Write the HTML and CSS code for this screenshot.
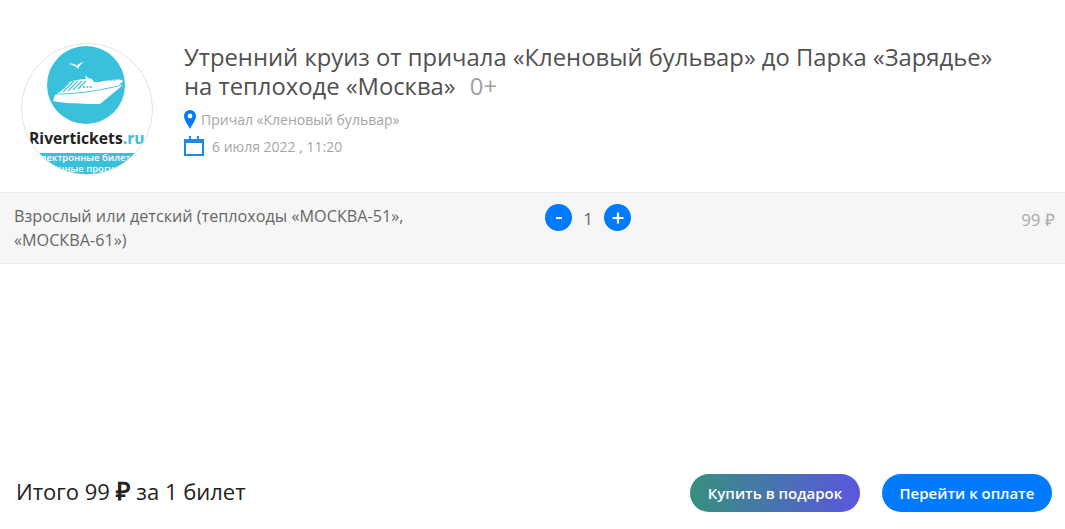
FILE: index.html
```html
<!DOCTYPE html>
<html lang="ru">
<head>
  <meta charset="UTF-8">
  <title>Утренний круиз</title>
  <link rel="stylesheet" href="styles.css">
</head>
<body>
  <div class="page">
    <header class="event">
      <div class="logo">
        <svg class="logo-art" width="130" height="130" viewBox="0 0 130 130">
          <circle cx="64" cy="41" r="39" fill="#38c0dc"/>
          <path d="M47 20c3-1 6 0 8 2 2-3 5-4 7-4-2 1-5 4-6 7-2-3-5-4-9-5z" fill="#fff"/>
          <path d="M31 57l2-6 3-2 10-10c6-3 12-4 18-4l-1-4 3 3 4 1 2 3h6c5-2 14-3 22-2l1 2-4 2 4 1-23 19c-14 0-32 0-47-3z" fill="#fff"/>
          <path d="M37 48l10-9M41 48l11-11M46 47l10-10M51 46l9-9M56 45l8-8" stroke="#38c0dc" stroke-width="1.1" fill="none"/>
          <path d="M34 50c18 0 38-2 66-9" stroke="#38c0dc" stroke-width="0.9" fill="none"/>
          <path d="M61 43h10M81 36h14" stroke="#38c0dc" stroke-width="1.4" stroke-dasharray="2 1.4" fill="none"/>
          <rect x="16" y="109" width="100" height="21" fill="#38c0dc"/>
        </svg>
        <span class="logo-name">Rivertickets<span class="logo-ru">.ru</span></span>
        <span class="logo-tag">электронные билеты</span>
        <span class="logo-tag logo-tag-low">речные прогулки</span>
      </div>
      <div class="event-info">
        <h1 class="event-title">Утренний круиз от причала «Кленовый бульвар» до Парка «Зарядье» на теплоходе «Москва» <span class="age">0+</span></h1>
        <div class="meta meta-place">
          <svg width="12" height="19" viewBox="0 0 12 19"><path fill-rule="evenodd" d="M6 0a6 6 0 0 1 6 6c0 4-4 9-6 13C4 15 0 10 0 6a6 6 0 0 1 6-6zm0 3.6a2.4 2.4 0 1 0 0 4.8 2.4 2.4 0 0 0 0-4.8z" fill="#007bff"/></svg>
          <span>Причал «Кленовый бульвар»</span>
        </div>
        <div class="meta meta-date">
          <svg width="20" height="20" viewBox="0 0 20 20"><path d="M1 4h18v15H1z" fill="none" stroke="#1e88e5" stroke-width="2"/><path d="M0 3h20v4H0z" fill="#1e88e5"/><path d="M5 0h2v4H5zM13 0h2v4h-2z" fill="#1e88e5"/></svg>
          <span>6 июля 2022 , 11:20</span>
        </div>
      </div>
    </header>

    <section class="ticket">
      <div class="ticket-name">Взрослый или детский (теплоходы «МОСКВА-51», «МОСКВА-61»)</div>
      <div class="counter">
        <span class="round-btn">
          <svg width="10" height="10" viewBox="0 0 10 10"><path d="M2 5h6" stroke="#fff" stroke-width="2"/></svg>
        </span>
        <span class="count">1</span>
        <span class="round-btn">
          <svg width="14" height="14" viewBox="0 0 14 14"><path d="M1.5 7h11M7 1.5v11" stroke="#fff" stroke-width="2.2"/></svg>
        </span>
      </div>
      <div class="ticket-price">99 ₽</div>
    </section>

    <footer class="total">
      <div class="total-text">Итого 99 <b class="rub">₽</b> за 1 билет</div>
      <div class="actions">
        <span class="btn btn-gift">Купить в подарок</span>
        <span class="btn btn-pay">Перейти к оплате</span>
      </div>
    </footer>
  </div>
</body>
</html>
```

FILE: styles.css
```css
html, body {
  margin: 0;
  padding: 0;
  background: #fff;
}
body {
  font-family: "Open Sans", sans-serif;
  color: #555;
}
.page {
  height: 529px;
  display: flex;
  flex-direction: column;
  overflow: hidden;
}
.event {
  display: flex;
  height: 192px;
  padding: 43px 0 0 21px;
  box-sizing: border-box;
}
.logo {
  width: 132px;
  height: 132px;
  border: 1px solid #e4e4e4;
  border-radius: 50%;
  box-sizing: border-box;
  overflow: hidden;
  position: relative;
  flex-shrink: 0;
}
.logo-art {
  display: block;
}
.logo-name {
  position: absolute;
  left: 7px;
  top: 84px;
  font-size: 15.7px;
  line-height: 20px;
  font-weight: 700;
  color: #222;
  white-space: nowrap;
}
.logo-ru {
  color: #38c0dc;
}
.logo-tag {
  position: absolute;
  left: 14px;
  top: 108px;
  font-size: 9.5px;
  line-height: 12px;
  font-weight: 600;
  color: #fff;
  white-space: nowrap;
}
.logo-tag-low {
  left: 25px;
  top: 119px;
}
.event-info {
  margin-left: 31px;
  width: 820px;
}
.event-title {
  margin: 0;
  font-size: 23.8px;
  line-height: 29px;
  font-weight: 400;
  color: #505050;
}
.age {
  margin-left: 8px;
  color: #a0a0a0;
}
.meta {
  display: flex;
  align-items: center;
  font-size: 14px;
  color: #a5a5a5;
}
.meta-place {
  margin-top: 9px;
  gap: 5px;
}
.meta-date {
  margin-top: 7px;
  gap: 8px;
}
.ticket {
  height: 72px;
  background: #f6f6f6;
  border-top: 1px solid #ebebeb;
  border-bottom: 1px solid #ebebeb;
  box-sizing: border-box;
  display: flex;
  padding: 11px 10px 0 14px;
}
.ticket-name {
  width: 531px;
  padding-right: 110px;
  box-sizing: border-box;
  font-size: 16.2px;
  line-height: 24px;
  color: #666;
}
.counter {
  display: flex;
  align-items: flex-start;
}
.round-btn {
  width: 27px;
  height: 27px;
  border-radius: 50%;
  background: #007bff;
  display: flex;
  align-items: center;
  justify-content: center;
}
.count {
  width: 32px;
  text-align: center;
  font-size: 17px;
  line-height: 30px;
  color: #666;
}
.ticket-price {
  margin-left: auto;
  font-size: 17px;
  line-height: 32px;
  color: #aaa;
}
.total {
  margin-top: auto;
  height: 265px;
  padding: 0 13px 17px 16px;
  box-sizing: border-box;
  display: flex;
  align-items: flex-end;
  justify-content: space-between;
}
.total-text {
  font-size: 22px;
  line-height: 38px;
  margin-bottom: 2px;
  color: #222;
}
.rub {
  font-size: 25px;
  line-height: 0;
  font-weight: 700;
}
.actions {
  display: flex;
  gap: 22px;
}
.btn {
  width: 170px;
  height: 38px;
  border-radius: 19px;
  display: flex;
  align-items: center;
  justify-content: center;
  color: #fff;
  font-size: 15px;
  font-weight: 600;
}
.btn-gift {
  background: linear-gradient(90deg, #36907f, #5b56df);
}
.btn-pay {
  background: #007bff;
}
```
